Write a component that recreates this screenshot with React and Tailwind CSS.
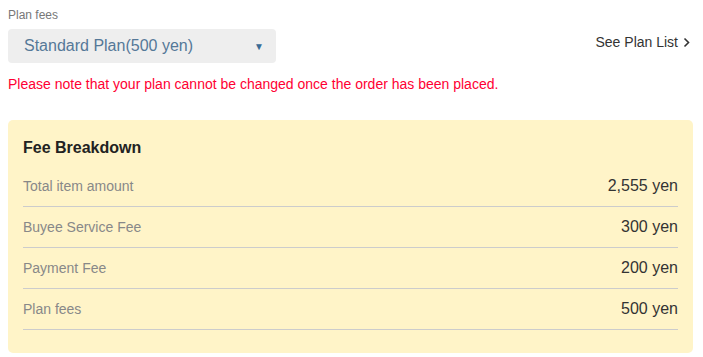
import React from 'react';

const rows = [
  { label: 'Total item amount', value: '2,555 yen' },
  { label: 'Buyee Service Fee', value: '300 yen' },
  { label: 'Payment Fee', value: '200 yen' },
  { label: 'Plan fees', value: '500 yen' },
];

const App = () => {
  return (
    <div className="w-[703px] h-[357px] bg-white px-2 pt-[8px] font-['Liberation_Sans',Arial,sans-serif]">
      <div className="text-[12px] leading-[14px] text-[#777]">Plan fees</div>
      <div className="flex items-start justify-between mt-[7px]">
        <div className="w-[268px] h-[34px] rounded-[4px] bg-[#eeeeee] flex items-center justify-between pl-4 pr-[12px]">
          <span className="text-[16px] text-[#557898]">Standard Plan(500 yen)</span>
          <span className="text-[10px] text-[#3a6b95]">▼</span>
        </div>
        <a className="flex items-center gap-[5px] text-[14px] leading-[20px] text-[#333] mr-[5px] mt-[3px]">
          See Plan List
          <svg width="7" height="11" viewBox="0 0 7 11" fill="none">
            <path d="M1.5 1.5L5.5 5.5L1.5 9.5" stroke="#333" strokeWidth="1.6" />
          </svg>
        </a>
      </div>
      <p className="text-[14px] text-[#ff0033] mt-[13px] leading-[16px]">
        Please note that your plan cannot be changed once the order has been placed.
      </p>
      <div className="mt-[28px] w-[685px] rounded-[5px] bg-[#fff4c8] px-[15px] pt-[18px] pb-[23px]">
        <h3 className="text-[16px] font-bold text-[#222] leading-[20px]">Fee Breakdown</h3>
        <div className="mt-[8px]">
          {rows.map((r) => (
            <div key={r.label} className="flex items-center justify-between h-[41px] border-b border-[#cccccc]">
              <span className="text-[14px] text-[#888]">{r.label}</span>
              <span className="text-[16px] text-[#333]">{r.value}</span>
            </div>
          ))}
        </div>
      </div>
    </div>
  );
};

export default App;
